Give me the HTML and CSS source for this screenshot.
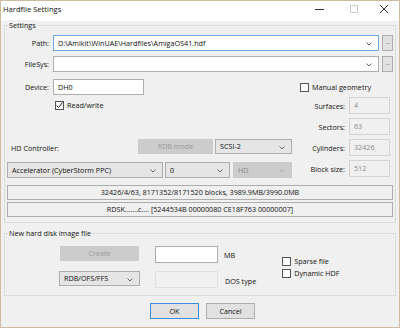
FILE: index.html
```html
<!DOCTYPE html>
<html lang="en">
<head>
  <meta charset="UTF-8">
  <title>Hardfile Settings</title>
  <link rel="stylesheet" href="styles.css">
</head>
<body>
  <div class="window">
    <div class="titlebar">
      <span class="title">Hardfile Settings</span>
      <div class="controls">
        <svg class="ctl" width="10" height="10" viewBox="0 0 10 10"><line x1="0" y1="5.5" x2="9" y2="5.5" stroke="#333" stroke-width="1"/></svg>
        <svg class="ctl" width="10" height="10" viewBox="0 0 10 10"><rect x="1.5" y="1.5" width="7" height="7" fill="none" stroke="#ccc" stroke-width="1"/></svg>
        <svg class="ctl" width="10" height="10" viewBox="0 0 10 10"><path d="M1 1 L9 9 M9 1 L1 9" stroke="#333" stroke-width="1"/></svg>
      </div>
    </div>

    <!-- Settings -->
    <div class="group settings">
      <div class="group-title"><span>Settings</span></div>

      <div class="row path-row">
        <span class="label">Path:</span>
        <div class="combo edit focus">D:\Amikit\WinUAE\Hardfiles\AmigaOS41.hdf<svg class="arrow" width="6" height="4" viewBox="0 0 6 4"><polyline points="0.5,0.5 3,3 5.5,0.5" fill="none" stroke="#666"/></svg></div>
        <div class="dots">...</div>
      </div>
      <div class="row filesys-row">
        <span class="label">FileSys:</span>
        <div class="combo edit"><svg class="arrow" width="6" height="4" viewBox="0 0 6 4"><polyline points="0.5,0.5 3,3 5.5,0.5" fill="none" stroke="#666"/></svg></div>
        <div class="dots">...</div>
      </div>
      <div class="row device-row">
        <span class="label">Device:</span>
        <div class="input device">DH0</div>
        <label class="check manual"><span class="box"></span>Manual geometry</label>
      </div>

      <div class="geo">
        <div class="geo-left">
          <label class="check rw"><span class="box"><svg width="9" height="9" viewBox="0 0 9 9"><polyline points="1.5,4.5 3.5,6.5 7.5,1.5" fill="none" stroke="#222" stroke-width="1"/></svg></span>Read/write</label>
          <div class="ctrl-row">
            <span class="hd-label">HD Controller:</span>
            <div class="btn disabled rdb">RDB mode</div>
            <div class="combo list scsi">SCSI-2<svg class="arrow" width="6" height="4" viewBox="0 0 6 4"><polyline points="0.5,0.5 3,3 5.5,0.5" fill="none" stroke="#666"/></svg></div>
          </div>
          <div class="accel-row">
            <div class="combo list accel">Accelerator (CyberStorm PPC)<svg class="arrow" width="6" height="4" viewBox="0 0 6 4"><polyline points="0.5,0.5 3,3 5.5,0.5" fill="none" stroke="#666"/></svg></div>
            <div class="combo list unit">0<svg class="arrow" width="6" height="4" viewBox="0 0 6 4"><polyline points="0.5,0.5 3,3 5.5,0.5" fill="none" stroke="#666"/></svg></div>
            <div class="combo list off hdtype">HD<svg class="arrow" width="6" height="4" viewBox="0 0 6 4"><polyline points="0.5,0.5 3,3 5.5,0.5" fill="none" stroke="#aaa"/></svg></div>
          </div>
        </div>
        <div class="geo-right">
          <div class="geo-field"><span class="label">Surfaces:</span><div class="input off">4</div></div>
          <div class="geo-field"><span class="label">Sectors:</span><div class="input off">63</div></div>
          <div class="geo-field"><span class="label">Cylinders:</span><div class="input off">32426</div></div>
          <div class="geo-field"><span class="label">Block size:</span><div class="input off">512</div></div>
        </div>
      </div>

      <div class="info first">32426/4/63, 8171352/8171520 blocks, 3989.9MB/3990.0MB</div>
      <div class="info">RDSK.......c.... [5244534B 00000080 CE18F763 00000007]</div>
    </div>

    <!-- New hard disk image file -->
    <div class="group newfile">
      <div class="group-title"><span>New hard disk image file</span></div>
      <div class="new-body">
        <div class="new-left">
          <div class="new-row">
            <div class="btn disabled create">Create</div>
            <div class="input size"></div>
            <span class="unit-label">MB</span>
          </div>
          <div class="new-row second">
            <div class="combo list fs">RDB/OFS/FFS<svg class="arrow" width="6" height="4" viewBox="0 0 6 4"><polyline points="0.5,0.5 3,3 5.5,0.5" fill="none" stroke="#666"/></svg></div>
            <div class="input off dostype"></div>
            <span class="unit-label dos">DOS type</span>
          </div>
        </div>
        <div class="new-checks">
          <label class="check"><span class="box"></span>Sparse file</label>
          <label class="check"><span class="box"></span>Dynamic HDF</label>
        </div>
      </div>
    </div>

    <div class="buttons">
      <div class="btn default">OK</div>
      <div class="btn">Cancel</div>
    </div>
  </div>
</body>
</html>
```

FILE: styles.css
```css
* {
  margin: 0;
  padding: 0;
  box-sizing: border-box;
}

body {
  font-family: "Open Sans", "Noto Sans", sans-serif;
  font-size: 7.2px;
  color: #111;
  background: #f0f0f0;
}

.window {
  width: 400px;
  height: 328px;
  border: 1px solid #cbbb9f;
  background: #f0f0f0;
}

.titlebar {
  height: 20px;
  background: #fff;
  display: flex;
  align-items: center;
  padding-left: 2px;
}

.title {
  font-size: 7.6px;
  margin-top: -4px;
}

.controls {
  margin-left: auto;
  display: flex;
  margin-top: -5px;
}

.ctl {
  margin-right: 20px;
}

.ctl:first-child {
  margin-right: 24px;
}

.ctl:last-child {
  margin-right: 10px;
}

/* group boxes */
.group {
  margin: 0 3px;
  border: 1px solid #dcdcdc;
  padding: 0 2px;
}

.settings {
  margin-top: 4px;
  padding-bottom: 5px;
}

.newfile {
  margin-top: 10px;
  padding-bottom: 7px;
}

.group-title {
  height: 10px;
  line-height: 10px;
  margin-top: -6px;
}

.group-title span {
  background: #f0f0f0;
  padding: 0 1px;
  margin-left: 1px;
}

.row {
  display: flex;
  align-items: center;
  height: 16px;
}

.path-row {
  margin-top: 5px;
}

.filesys-row {
  margin-top: 5px;
}

.device-row {
  margin-top: 7px;
}

.label {
  width: 42px;
  text-align: right;
  margin-right: 4px;
  flex-shrink: 0;
}

/* fields */
.input,
.combo {
  height: 16px;
  line-height: 14px;
  border: 1px solid #adadad;
  background: #fff;
  padding-left: 4px;
  position: relative;
  white-space: nowrap;
}

.combo .arrow {
  position: absolute;
  right: 6px;
  top: 6px;
}

.combo.edit {
  width: 327px;
}

.combo.focus {
  border-color: #6ea8e6;
}

.combo.list {
  background: #e5e5e5;
  height: 15px;
  line-height: 13px;
}

.combo.off {
  background: #cccccc;
  border-color: #cccccc;
  color: #8a8a8a;
}

.dots {
  width: 11px;
  height: 16px;
  margin-left: 3px;
  border: 1px solid #adadad;
  background: #e1e1e1;
  text-align: center;
  line-height: 12px;
  font-size: 6px;
  color: #444;
}

.input.device {
  width: 91px;
}

.input.off {
  background: #f0f0f0;
  border-color: #d4d4d4;
  color: #8a8a8a;
}

/* checkboxes */
.check {
  display: flex;
  align-items: center;
  height: 10px;
}

.box {
  width: 9px;
  height: 9px;
  border: 1px solid #555;
  background: #fff;
  margin-right: 3px;
  display: flex;
}

.box svg {
  margin: -1px;
}

.manual {
  margin-left: 156px;
}

/* geometry block */
.geo {
  display: flex;
  margin-top: 2px;
}

.geo-left {
  width: 285px;
}

.rw {
  margin-top: 3px;
  padding-left: 48px;
}

.ctrl-row {
  display: flex;
  align-items: center;
  height: 15px;
  margin-top: 29px;
}

.hd-label {
  width: 131px;
  padding-left: 4px;
  margin-top: 2px;
}

.btn {
  height: 16px;
  line-height: 14px;
  border: 1px solid #adadad;
  background: #e1e1e1;
  text-align: center;
}

.btn.disabled {
  background: #cccccc;
  border-color: #cccccc;
  color: #9a9a9a;
}

.rdb {
  width: 75px;
  height: 15px;
  line-height: 13px;
}

.scsi {
  width: 77px;
  margin-left: 2px;
}

.accel-row {
  display: flex;
  margin-top: 8px;
}

.accel-row .combo {
  height: 16px;
  line-height: 14px;
}

.accel {
  width: 156px;
}

.unit {
  width: 65px;
  margin-left: 2px;
}

.hdtype {
  width: 59px;
  margin-left: 3px;
}

.geo-right {
  margin-left: 8px;
  display: flex;
  flex-direction: column;
  gap: 4px;
}

.geo-field {
  display: flex;
  align-items: center;
}

.geo-field .label {
  width: 45px;
}

.geo-field .input {
  width: 41px;
  height: 17px;
  line-height: 15px;
}

/* info lines */
.info {
  height: 15px;
  line-height: 13px;
  border: 1px solid #adadad;
  text-align: center;
  margin-top: 2px;
  width: 386px;
}

.info.first {
  margin-top: 7px;
}

/* new hard disk image */
.new-body {
  display: flex;
}

.new-left {
  padding-left: 52px;
}

.new-row {
  display: flex;
  align-items: flex-start;
  margin-top: 8px;
}

.new-row.second {
  margin-top: 8px;
}

.create {
  width: 79px;
  height: 15px;
  line-height: 13px;
  margin-left: 1px;
  margin-right: 16px;
}

.input.size,
.input.dostype {
  width: 63px;
  height: 17px;
}

.input.dostype {
  background: #f0f0f0;
  border-color: #e0e0e0;
}

.fs {
  width: 81px;
  height: 16px;
  margin-right: 15px;
}

.unit-label {
  margin-left: 6px;
  margin-top: 4px;
}

.unit-label.dos {
  margin-left: 7px;
  margin-top: 5px;
}

.new-checks {
  margin-left: 26px;
  margin-top: 18px;
  display: flex;
  flex-direction: column;
  gap: 2px;
}

.buttons {
  display: flex;
  gap: 7px;
  padding-left: 149px;
  margin-top: 7px;
}

.buttons .btn {
  width: 49px;
}

.btn.default {
  border-color: #3c8ee0;
}
```
